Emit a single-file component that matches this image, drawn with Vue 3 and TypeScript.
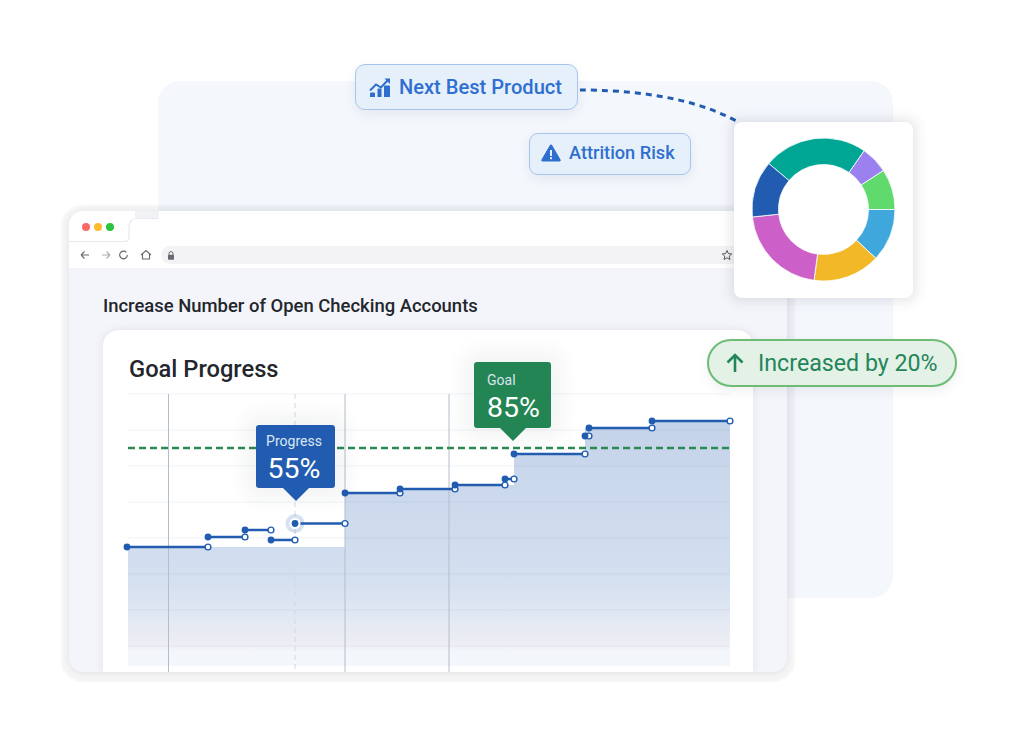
<script setup lang="ts">
import { computed } from 'vue'

interface Seg { from: number; to: number; color: string }
const segs: Seg[] = [
  { from: 310, to: 394.7, color: '#00a694' },
  { from: 34.7, to: 57, color: '#9b80f0' },
  { from: 57, to: 90, color: '#60da6c' },
  { from: 90, to: 133, color: '#3fa7dc' },
  { from: 133, to: 187.6, color: '#f3b827' },
  { from: 187.6, to: 264, color: '#cc60c8' },
  { from: 264, to: 310, color: '#215cb0' },
]
const pt = (r: number, a: number): string => {
  const t = (a * Math.PI) / 180
  return `${(89.5 + r * Math.sin(t)).toFixed(2)} ${(87.5 - r * Math.cos(t)).toFixed(2)}`
}
const donut = computed(() =>
  segs.map((s) => {
    const big = s.to - s.from > 180 ? 1 : 0
    return {
      color: s.color,
      d: `M${pt(71.5, s.from)}A71.5 71.5 0 ${big} 1 ${pt(71.5, s.to)}L${pt(45, s.to)}A45 45 0 ${big} 0 ${pt(45, s.from)}Z`,
    }
  }),
)

const steps: number[][] = [
  [127, 208, 547], [208, 245, 537], [245, 271, 530], [271, 295, 540], [295, 345, 523.5],
  [345, 400, 493], [400, 455, 489], [455, 505, 485], [505, 514, 479], [514, 585, 454],
  [585, 589, 436], [589, 652, 428], [652, 730, 421],
]
const grid = [394, 430, 466, 502, 538, 574, 610, 646]
const verticals = [168.5, 345, 449]
</script>

<template>
  <div class="stage">
    <div class="panel"></div>

    <section class="browser">
      <div class="tabs">
        <svg class="tab-edge" width="90" height="31" viewBox="0 0 90 31">
          <path d="M66 7.5V0H90V7.5Z" fill="#f1f2f6" />
          <path d="M0 30.5H55Q60 30.5 60 26V17Q60 7.5 68 7.5H89" fill="none" stroke="#e6e9f0" stroke-width="1.2" />
        </svg>
        <i class="dot red"></i><i class="dot amber"></i><i class="dot green"></i>
      </div>
      <div class="nav">
        <svg class="nav-icons" width="74" height="14" viewBox="0 0 74 14">
          <path d="M1 7H9M1 7L4.5 3.5M1 7L4.5 10.5" fill="none" stroke="#666a70" stroke-width="1.1" />
          <path d="M30 7H22M30 7L26.5 3.5M30 7L26.5 10.5" fill="none" stroke="#a9adb3" stroke-width="1.1" />
          <path d="M46.3 4.4A3.8 3.8 0 1 0 47.3 7" fill="none" stroke="#666a70" stroke-width="1.2" />
          <path d="M61 7L66 2.5L71 7M62.5 6V11H69.5V6" fill="none" stroke="#666a70" stroke-width="1.1" />
        </svg>
        <div class="address">
          <svg class="lock" width="8" height="9" viewBox="0 0 8 9">
            <path d="M2 4V2.6A2 2 0 0 1 6 2.6V4" fill="none" stroke="#666a70" stroke-width="1" />
            <rect x="1" y="3.8" width="6" height="5" rx="0.8" fill="#666a70" />
          </svg>
          <svg class="star" width="12" height="12" viewBox="0 0 24 24">
            <path d="M12 3L14.8 9.2L21.5 9.9L16.5 14.4L17.9 21L12 17.6L6.1 21L7.5 14.4L2.5 9.9L9.2 9.2Z" fill="none" stroke="#55585e" stroke-width="2" />
          </svg>
        </div>
      </div>
      <div class="content">
        <h1 class="page-title">Increase Number of Open Checking Accounts</h1>
        <div class="card">
          <h2 class="card-title">Goal Progress</h2>
          <div class="chart">
            <svg class="chart-svg" width="650" height="282" viewBox="103 390 650 282">
              <defs>
                <linearGradient id="areaFill" gradientUnits="userSpaceOnUse" x1="0" y1="421" x2="0" y2="666">
                  <stop offset="0" stop-color="#c5d3ea" />
                  <stop offset="0.65" stop-color="#d4e0f0" />
                  <stop offset="0.78" stop-color="#e0e7f3" />
                  <stop offset="0.9" stop-color="#ecedf3" />
                  <stop offset="0.94" stop-color="#f3f6fb" />
                  <stop offset="1" stop-color="#f4f7fc" />
                </linearGradient>
              </defs>
              <path d="M128 547H345V493H400V489H455V485H514V454H585V428H652V421H730V666H128Z" fill="url(#areaFill)" />
              <line v-for="y in grid" :key="y" x1="128" x2="730" :y1="y" :y2="y" stroke="#5a6a90" stroke-opacity="0.06" stroke-width="1.4" />
              <line v-for="x in verticals" :key="x" :x1="x" :x2="x" y1="394" y2="672" stroke="#b4bdcc" stroke-width="1" />
              <line x1="295" x2="295" y1="394" y2="672" stroke="#d3d8e2" stroke-width="1" stroke-dasharray="5 4" />
              <line x1="128" x2="730" y1="448" y2="448" stroke="#2a8a52" stroke-width="2.6" stroke-dasharray="7 4" />
              <circle cx="295" cy="523.5" r="9.5" fill="#215cb0" fill-opacity="0.18" />
              <g v-for="s in steps" :key="s[0]">
                <line :x1="s[0]" :x2="s[1]" :y1="s[2]" :y2="s[2]" stroke="#215cb0" stroke-width="2.5" />
              </g>
              <g v-for="s in steps" :key="'p' + s[0]">
                <circle :cx="s[1]" :cy="s[2]" r="2.9" fill="#fff" stroke="#215cb0" stroke-width="1.4" />
              </g>
              <circle cx="295" cy="523.5" r="5.5" fill="#fff" />
              <g v-for="s in steps" :key="'f' + s[0]">
                <circle :cx="s[0]" :cy="s[2]" r="3.4" fill="#215cb0" />
              </g>
            </svg>
            <div class="tip tip-blue">
              <span class="tip-label">Progress</span>
              <strong class="tip-value">55%</strong>
            </div>
            <div class="tip tip-green">
              <span class="tip-label">Goal</span>
              <strong class="tip-value">85%</strong>
            </div>
          </div>
        </div>
      </div>
    </section>

    <svg class="link" width="170" height="50" viewBox="575 80 170 50">
      <path d="M580 90C625 90 690 95 738 122" fill="none" stroke="#215cb0" stroke-width="3" stroke-dasharray="6 5" />
    </svg>

    <div class="chip chip-next">
      <svg width="22" height="20" viewBox="0 0 22 20">
        <path d="M1 13.5L7 7.5L12 10.5L18.5 3.5" fill="none" stroke="#2f6fd0" stroke-width="2" />
        <path d="M15.5 1.5H21V7Z" fill="#2f6fd0" />
        <path d="M1 20V16.5Q1 15.5 2 15.5H5Q6 15.5 6 16.5V20ZM8.5 20V12.5Q8.5 11.5 9.5 11.5H11.5Q12.5 11.5 12.5 12.5V20ZM15 20V9.5Q15 8.5 16 8.5H20Q21 8.5 21 9.5V20Z" fill="#2f6fd0" />
      </svg>
      <span>Next Best Product</span>
    </div>

    <div class="chip chip-risk">
      <svg width="20" height="18" viewBox="0 0 20 18">
        <path d="M10 .5Q10.8 .5 11.2 1.2L19.6 15.8Q20.3 17.4 18.6 17.4H1.4Q-.3 17.4 .4 15.8L8.8 1.2Q9.2 .5 10 .5Z" fill="#2f6fd0" />
        <rect x="9" y="6" width="2" height="6" fill="#e6f0fb" />
        <rect x="9" y="13.2" width="2" height="2" fill="#e6f0fb" />
      </svg>
      <span>Attrition Risk</span>
    </div>

    <div class="donut-card">
      <svg width="179" height="176" viewBox="0 0 179 176">
        <path v-for="p in donut" :key="p.color" :d="p.d" :fill="p.color" stroke="#fff" stroke-opacity="0.8" stroke-width="1" />
      </svg>
    </div>

    <div class="increase">
      <svg width="18" height="20" viewBox="0 0 18 20">
        <path d="M9 19V2M1.5 9.5L9 2L16.5 9.5" fill="none" stroke="#23855a" stroke-width="2.6" />
      </svg>
      <span>Increased by 20%</span>
    </div>
  </div>
</template>

<style scoped>
.stage {
  position: relative;
  width: 1024px;
  height: 734px;
  overflow: hidden;
  background: #fff;
  font-family: Roboto, "Liberation Sans", sans-serif;
}
.panel {
  position: absolute;
  left: 158px;
  top: 81px;
  width: 735px;
  height: 517px;
  border-radius: 22px;
  background: #f4f7fc;
}
.browser {
  position: absolute;
  left: 69px;
  top: 211px;
  width: 718px;
  height: 461px;
  display: flex;
  flex-direction: column;
  border-radius: 14px;
  overflow: hidden;
  background: #f4f5fa;
  box-shadow: 0 2px 2px 8px rgba(60, 66, 80, 0.05), 0 1px 5px 1px rgba(60, 66, 80, 0.08);
}
.tabs {
  position: relative;
  height: 31px;
  flex: none;
  display: flex;
  align-items: center;
  gap: 4px;
  padding-left: 13px;
  background: #fff;
}
.tab-edge {
  position: absolute;
  left: 0;
  top: 0;
}
.dot {
  position: relative;
  width: 8px;
  height: 8px;
  border-radius: 50%;
}
.red { background: #fb6a6a; }
.amber { background: #fbbb2d; }
.green { background: #2cc33f; }
.nav {
  height: 26px;
  flex: none;
  display: flex;
  align-items: center;
  gap: 7px;
  padding: 0 52px 0 9px;
  background: #fff;
}
.nav-icons { flex: none; margin-left: 2px; }
.address {
  flex: 1;
  height: 18px;
  border-radius: 9px 0 0 9px;
  background: #f3f3f5;
  display: flex;
  align-items: center;
  justify-content: space-between;
  padding: 0 2px 0 6px;
}
.lock { flex: none; }
.star { flex: none; }
.content {
  flex: 1;
  min-height: 0;
  padding: 27px 34px 0;
  display: flex;
  flex-direction: column;
}
.page-title {
  margin: 0 0 13px;
  font-size: 18.45px;
  line-height: 22px;
  font-weight: 500;
  color: #23262c;
}
.card {
  flex: 1;
  min-height: 0;
  width: 650px;
  border-radius: 16px 16px 0 0;
  background: #fff;
  box-shadow: 0 0 8px rgba(50, 56, 70, 0.1);
}
.card-title {
  margin: 0;
  padding: 24px 0 0 26px;
  font-size: 23.7px;
  line-height: 30px;
  font-weight: 500;
  color: #23262c;
  height: 60px;
  box-sizing: border-box;
}
.chart {
  position: relative;
  height: 282px;
}
.chart-svg { display: block; }
.tip {
  position: absolute;
  display: flex;
  flex-direction: column;
  align-items: center;
  box-sizing: border-box;
  border-radius: 3px;
  color: #fff;
  box-shadow: 0 0 20px 10px rgba(40, 46, 60, 0.06);
}
.tip::after {
  content: "";
  position: absolute;
  left: 50%;
  bottom: -13px;
  margin-left: -13px;
  border-style: solid;
  border-width: 13px 13px 0;
  border-color: inherit;
  border-left-color: transparent;
  border-right-color: transparent;
}
.tip-blue {
  left: 153px;
  top: 35px;
  width: 79px;
  height: 63px;
  padding: 8px 3px 0 0;
  background: #215cb0;
  border-color: #215cb0;
}
.tip-green {
  left: 371px;
  top: -28px;
  width: 77px;
  height: 66px;
  padding: 10px 0 0 13px;
  align-items: flex-start;
  background: #238553;
  border-color: #238553;
}
.tip-label {
  font-size: 14px;
  line-height: 17px;
  color: #dbe6f3;
}
.tip-value {
  margin-top: 2px;
  font-size: 28.5px;
  line-height: 34px;
  font-weight: 400;
}
.link {
  position: absolute;
  left: 575px;
  top: 80px;
}
.chip {
  position: absolute;
  display: flex;
  align-items: center;
  box-sizing: border-box;
  background: #e6f0fb;
  border: 1.5px solid #a7c5ec;
  color: #2f6fd0;
  font-weight: 500;
  box-shadow: 0 4px 12px rgba(40, 60, 90, 0.08);
}
.chip-next {
  left: 355px;
  top: 64px;
  width: 223px;
  height: 46px;
  border-radius: 10px;
  padding-left: 13px;
  gap: 8px;
  font-size: 20.1px;
}
.chip-risk {
  left: 529px;
  top: 133px;
  width: 162px;
  height: 42px;
  border-radius: 9px;
  padding: 0 0 3px 11px;
  gap: 8px;
  font-size: 18.2px;
}
.donut-card {
  position: absolute;
  left: 734px;
  top: 122px;
  width: 179px;
  height: 176px;
  border-radius: 8px;
  background: #fff;
  box-shadow: 0 0 10px 8px rgba(60, 66, 80, 0.05), 0 0 8px rgba(50, 56, 70, 0.08);
}
.donut-card svg { display: block; }
.increase {
  position: absolute;
  left: 707px;
  top: 339px;
  width: 250px;
  height: 48px;
  box-sizing: border-box;
  display: flex;
  align-items: center;
  gap: 14px;
  padding-left: 17px;
  border: 2px solid #6dbb75;
  border-radius: 24px;
  background: #e4f1e6;
  color: #23855a;
  font-size: 23.2px;
  box-shadow: 0 4px 12px rgba(40, 60, 50, 0.08);
}
</style>
